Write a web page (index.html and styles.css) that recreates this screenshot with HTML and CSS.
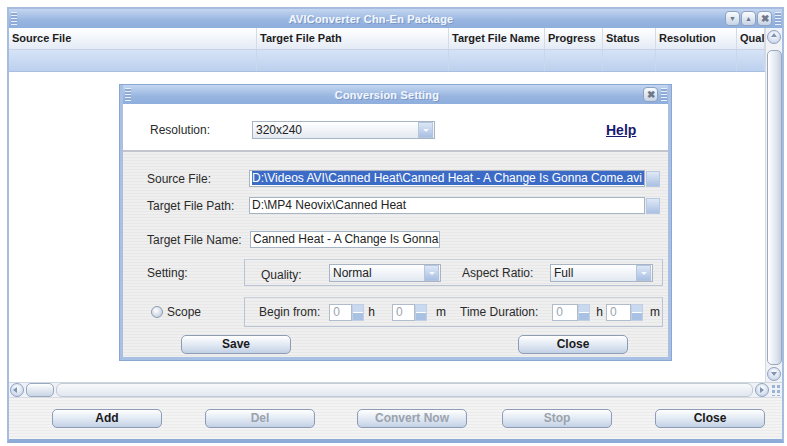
FILE: index.html
```html
<!DOCTYPE html>
<html lang="en">
<head>
    <meta charset="UTF-8">
    <title>AVIConverter Chn-En Package</title>
    <link rel="stylesheet" href="styles.css">
</head>
<body>
    <div class="window">
        <div class="titlebar">
            <span class="grip"></span>
            <span class="title">AVIConverter Chn-En Package</span>
            <span class="tbtns">
                <span class="tbtn">&#9660;</span>
                <span class="tbtn">&#9650;</span>
                <span class="tbtn x">&#10006;</span>
                <span class="grip right"></span>
            </span>
        </div>

        <div class="tablearea">
            <div class="table">
                <div class="thead">
                    <div>Source File</div>
                    <div>Target File Path</div>
                    <div>Target File Name</div>
                    <div>Progress</div>
                    <div>Status</div>
                    <div>Resolution</div>
                    <div>Qual</div>
                </div>
                <div class="trow">
                    <div></div><div></div><div></div><div></div><div></div><div></div><div></div>
                </div>
            </div>
            <div class="vscroll">
                <span class="sbtn up"></span>
                <span class="vthumb"></span>
                <span class="sbtn down"></span>
            </div>

            <div class="dialog">
                <div class="dtitle">
                    <span class="grip"></span>
                    <span class="title">Conversion Setting</span>
                    <span class="tbtns">
                        <span class="tbtn x">&#10006;</span>
                        <span class="grip right"></span>
                    </span>
                </div>
                <div class="dtop">
                    <span class="lbl">Resolution:</span>
                    <span class="combo res"><span class="val">320x240</span><span class="arrow"></span></span>
                    <a class="help" href="#">Help</a>
                </div>
                <div class="dpanel">
                    <div class="frow r1">
                        <span class="lbl">Source File:</span>
                        <span class="field wide"><span class="sel">D:\Videos AVI\Canned Heat\Canned Heat - A Change Is Gonna Come.avi</span></span>
                        <span class="browse"></span>
                    </div>
                    <div class="frow r2">
                        <span class="lbl">Target File Path:</span>
                        <span class="field wide">D:\MP4 Neovix\Canned Heat</span>
                        <span class="browse"></span>
                    </div>
                    <div class="frow r3">
                        <span class="lbl">Target File Name:</span>
                        <span class="field name">Canned Heat - A Change Is Gonna</span>
                    </div>
                    <div class="frow r4">
                        <span class="lbl">Setting:</span>
                        <div class="group">
                            <span class="glbl q">Quality:</span>
                            <span class="combo qual"><span class="val">Normal</span><span class="arrow"></span></span>
                            <span class="glbl ar">Aspect Ratio:</span>
                            <span class="combo aspect"><span class="val">Full</span><span class="arrow"></span></span>
                        </div>
                    </div>
                    <div class="frow r5">
                        <span class="lbl scope"><span class="radio"></span>Scope</span>
                        <div class="group">
                            <span class="glbl">Begin from:</span>
                            <span class="spin s1"><span class="num">0</span><span class="arrows"></span></span>
                            <span class="unit">h</span>
                            <span class="spin s2"><span class="num">0</span><span class="arrows"></span></span>
                            <span class="unit u2">m</span>
                            <span class="glbl td">Time Duration:</span>
                            <span class="spin s3"><span class="num">0</span><span class="arrows"></span></span>
                            <span class="unit u3">h</span>
                            <span class="spin s4"><span class="num">0</span><span class="arrows"></span></span>
                            <span class="unit u4">m</span>
                        </div>
                    </div>
                    <div class="dbuttons">
                        <span class="btn save">Save</span>
                        <span class="btn close">Close</span>
                    </div>
                </div>
            </div>
        </div>

        <div class="hscroll">
            <span class="sbtn left"></span>
            <span class="hthumb"></span>
            <span class="htrack"></span>
            <span class="sbtn right"></span>
            <span class="dots"></span>
        </div>

        <div class="buttonbar">
            <span class="btn">Add</span>
            <span class="btn off">Del</span>
            <span class="btn off">Convert Now</span>
            <span class="btn off">Stop</span>
            <span class="btn">Close</span>
        </div>
    </div>
</body>
</html>
```

FILE: styles.css
```css
body {
    margin: 0;
    background: #ffffff;
    font-family: "Liberation Sans", Arial, sans-serif;
    font-size: 12px;
    color: #222;
}
.window {
    margin: 7px 0 0 7px;
    width: 773px;
    height: 430px;
    border: 2px solid #a7bde0;
    border-bottom: 4px solid #8fabd8;
    background: #f2f2f2;
    display: flex;
    flex-direction: column;
}
.titlebar, .dtitle {
    height: 19px;
    flex: none;
    display: flex;
    align-items: center;
    position: relative;
    background: linear-gradient(#c4d6f0, #98b5e0 60%, #8eaedd);
}
.grip {
    width: 6px;
    height: 13px;
    margin-left: 2px;
    background: repeating-linear-gradient(#e8f0fb 0 1px, #8ea9d4 1px 3px);
}
.grip.right {
    margin-left: 2px;
    margin-right: 1px;
}
.title {
    flex: 1;
    text-align: center;
    font-weight: bold;
    font-size: 11px;
    color: #f2f7fe;
    text-shadow: 1px 1px 0 #7c98c4, -1px 0 0 #b0c6e8;
    letter-spacing: 0.2px;
}
.tbtns {
    display: flex;
    align-items: center;
    gap: 1px;
}
.tbtn {
    width: 13px;
    height: 13px;
    border: 1px solid #8ea2c0;
    border-radius: 4px;
    background: linear-gradient(#fafcff, #c6d3e6);
    color: #6d7788;
    font-size: 7px;
    line-height: 13px;
    text-align: center;
}
.tbtn.x {
    font-size: 10px;
    font-weight: bold;
}

/* table */
.tablearea {
    height: 354px;
    flex: none;
    display: flex;
    position: relative;
    background: #ffffff;
}
.table {
    flex: 1;
}
.thead, .trow {
    display: grid;
    grid-template-columns: 248px 192px 96px 58px 53px 81px 1fr;
}
.thead {
    height: 21px;
    background: linear-gradient(#ffffff, #e4ebf5);
    border-bottom: 1px solid #c8d4e6;
}
.thead div {
    font-weight: bold;
    font-size: 11px;
    line-height: 21px;
    padding-left: 3px;
    color: #1d1d1d;
    border-right: 1px solid #d4dbe6;
    white-space: nowrap;
    overflow: hidden;
}
.trow {
    height: 21px;
    background: linear-gradient(#d6e3f6, #bcd0ee);
    border-bottom: 1px solid #a8bfe2;
}
.trow div {
    border-right: 1px solid #cbd8ec;
}
.vscroll {
    width: 16px;
    flex: none;
    display: flex;
    flex-direction: column;
    align-items: center;
    background: #f0f2f6;
    border-left: 1px solid #d6dbe2;
}
.sbtn {
    width: 12px;
    height: 12px;
    flex: none;
    border: 1px solid #8fa3c2;
    border-radius: 50%;
    background: radial-gradient(circle at 50% 35%, #ffffff, #bccbe2);
    position: relative;
}
.sbtn::after {
    content: "";
    position: absolute;
    left: 3px;
    top: 3px;
    border: 3px solid transparent;
}
.sbtn.up { margin-top: 2px; }
.sbtn.up::after { border-bottom: 4px solid #7f93b4; top: -1px; }
.sbtn.down { margin-bottom: 1px; }
.sbtn.down::after { border-top: 4px solid #7f93b4; top: 4px; }
.vthumb {
    width: 13px;
    flex: 1;
    margin: 6px 0 2px;
    border: 1px solid #9aa9bf;
    border-radius: 5px;
    background: linear-gradient(90deg, #ffffff, #dbe3ee 70%, #c4cfdf);
}

/* dialog */
.dialog {
    position: absolute;
    left: 111px;
    top: 57px;
    width: 545px;
    height: 272px;
    border: 3px solid #a8c0e4;
    border-top: 0;
    background: #ececec;
    display: flex;
    flex-direction: column;
    box-shadow: 0 0 0 1px #8aa6d2;
}
.dtop {
    height: 48px;
    flex: none;
    display: flex;
    align-items: center;
    background: #ffffff;
    border-bottom: 2px solid #c2c6cc;
    padding-left: 27px;
    padding-top: 6px;
    box-sizing: border-box;
}
.lbl {
    width: 102px;
    flex: none;
    color: #2a2a2a;
}
.combo {
    height: 18px;
    display: flex;
    align-items: center;
    border: 1px solid #a7b4c6;
    background: linear-gradient(#ffffff, #e3e9f1);
    box-sizing: border-box;
}
.combo .val {
    flex: 1;
    padding-left: 3px;
}
.combo .arrow {
    width: 13px;
    height: 14px;
    margin-right: 1px;
    border: 1px solid #b5c5dc;
    background: linear-gradient(#dce7f6, #a9c0e2);
    position: relative;
}
.combo .arrow::after {
    content: "";
    position: absolute;
    left: 4px;
    top: 6px;
    border: 3px solid transparent;
    border-top: 3px solid #f5f8fc;
}
.combo.res { width: 183px; }
.help {
    margin-left: 171px;
    font-weight: bold;
    font-size: 14px;
    color: #1a1a6e;
    text-decoration: underline;
}
.dpanel {
    flex: 1;
    padding: 18px 0 0 24px;
    background: repeating-linear-gradient(#efefef 0 2px, #e7e7e7 2px 3px);
}
.frow {
    display: flex;
    align-items: center;
}
.r2 { margin-top: 10px; }
.r3 { margin-top: 17px; }
.r4 { margin-top: 11px; }
.r5 { margin-top: 11px; }
.field {
    height: 17px;
    line-height: 15px;
    border: 1px solid #a7b4c6;
    background: #ffffff;
    box-sizing: border-box;
    padding-left: 2px;
    white-space: nowrap;
    overflow: hidden;
}
.field.wide { width: 396px; }
.field.name { width: 190px; margin-left: 1px; }
.sel {
    background: #3b6bc7;
    color: #ffffff;
    padding-right: 2px;
}
.browse {
    width: 14px;
    height: 16px;
    margin-left: 1px;
    border: 1px solid #b9c8de;
    background: linear-gradient(#dfe8f6, #a9c1e3);
    box-sizing: border-box;
}
.group {
    width: 419px;
    margin-left: -5px;
    border: 1px solid #b8c4d4;
    border-top-color: #c8d0dc;
    display: flex;
    align-items: center;
    box-sizing: border-box;
}
.r4 .group { height: 27px; padding-left: 16px; }
.r5 .group { height: 30px; padding-left: 14px; }
.glbl { color: #2a2a2a; }
.glbl.q { width: 68px; padding-top: 4px; }
.combo.qual { width: 112px; }
.glbl.ar { margin-left: 21px; width: 88px; }
.combo.aspect { width: 103px; }
.scope {
    display: flex;
    align-items: center;
    margin-left: 4px;
    width: 98px;
}
.radio {
    width: 10px;
    height: 10px;
    margin-right: 4px;
    border: 1px solid #8e9cb2;
    border-radius: 50%;
    background: radial-gradient(circle at 40% 35%, #ffffff, #b4c2d6);
}
.spin {
    display: flex;
    height: 17px;
}
.spin .num {
    border: 1px solid #b0bccc;
    background: #ffffff;
    color: #9aa4b2;
    padding-left: 3px;
    line-height: 15px;
    box-sizing: border-box;
    width: 23px;
}
.spin .arrows {
    width: 10px;
    background: linear-gradient(#c9d9ef 0 48%, #ffffff 48% 56%, #a9c1e3 56%);
    border: 1px solid #c2cfe2;
}
.spin.s1 { margin-left: 9px; }
.spin.s2 { margin-left: 17px; }
.spin.s3 { margin-left: 14px; }
.spin.s3 .num { width: 26px; }
.spin.s4 { margin-left: 3px; }
.spin.s4 .num { width: 25px; }
.unit { margin-left: 4px; }
.unit.u2 { margin-left: 9px; }
.unit.u3 { margin-left: 6px; }
.unit.u4 { margin-left: 7px; }
.glbl.td { margin-left: 14px; }
.dbuttons {
    display: flex;
    margin-top: 8px;
    padding-left: 34px;
}
.dbuttons .close { margin-left: 227px; }

/* buttons */
.btn {
    width: 110px;
    height: 19px;
    flex: none;
    box-sizing: border-box;
    border: 1px solid #8d9cb4;
    border-radius: 5px;
    background: linear-gradient(#ffffff, #dfe7f2 55%, #c3d1e6);
    text-align: center;
    line-height: 17px;
    font-weight: bold;
    font-size: 12px;
    color: #1a1a1a;
}
.btn.off { color: #9aa2ad; }

/* bottom */
.hscroll {
    height: 14px;
    flex: none;
    display: flex;
    align-items: center;
    background: #eef1f6;
    border-top: 1px solid #d0d6de;
}
.sbtn.left { margin-left: 1px; }
.sbtn.left::after { border-right: 4px solid #7f93b4; left: -1px; }
.sbtn.right::after { border-left: 4px solid #7f93b4; left: 4px; }
.hthumb {
    width: 26px;
    height: 12px;
    margin-left: 2px;
    border: 1px solid #9aa9bf;
    border-radius: 5px;
    background: linear-gradient(#ffffff, #c9d4e4);
}
.htrack {
    flex: 1;
    height: 12px;
    margin: 0 2px;
    border: 1px solid #c2cad6;
    border-radius: 6px;
    background: linear-gradient(#f8f9fb, #e2e7ef);
}
.dots {
    width: 10px;
    height: 12px;
    margin: 0 1px 0 2px;
    background: radial-gradient(circle, #9db3d6 1.5px, transparent 2px) 0 0 / 5px 5px;
}
.buttonbar {
    flex: 1;
    display: flex;
    align-items: center;
    padding-left: 43px;
    background: repeating-linear-gradient(#f3f3f3 0 2px, #ebebeb 2px 3px);
    border-top: 1px solid #d7dbe1;
}
.buttonbar .btn:nth-child(2) { margin-left: 43px; }
.buttonbar .btn:nth-child(3) { margin-left: 42px; }
.buttonbar .btn:nth-child(4) { margin-left: 35px; }
.buttonbar .btn:nth-child(5) { margin-left: 43px; }
```
